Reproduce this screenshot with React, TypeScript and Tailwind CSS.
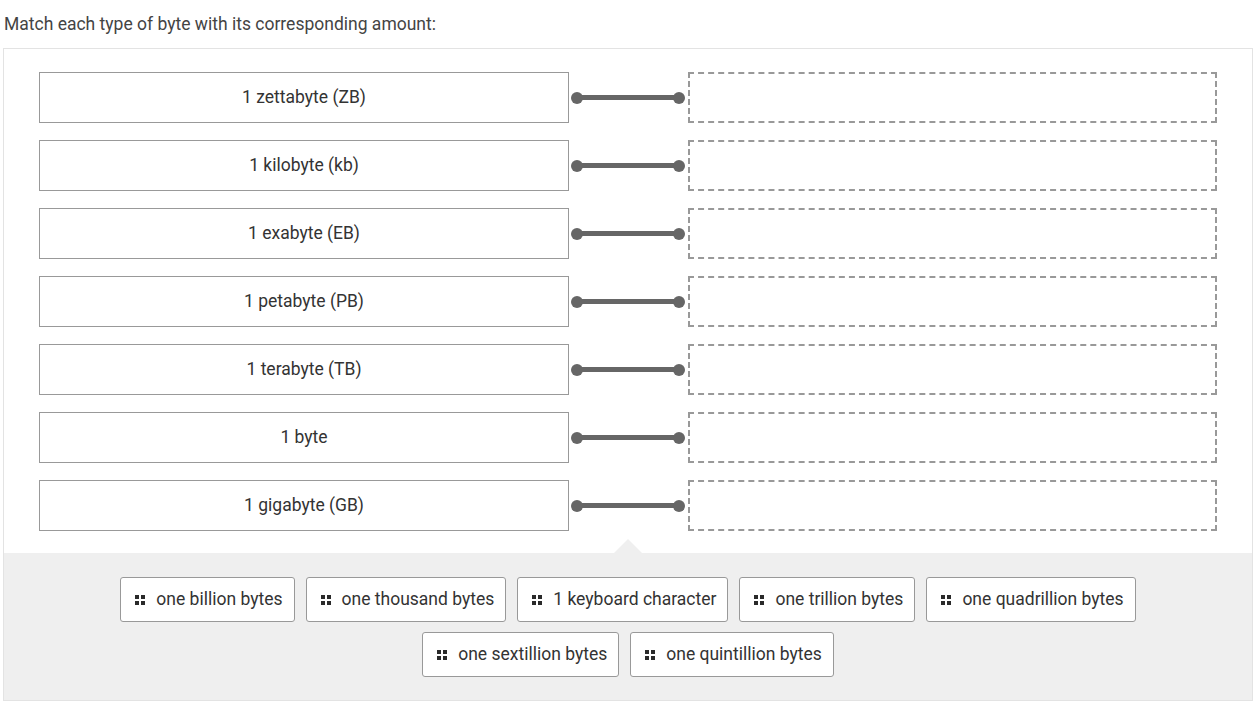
const terms = [
  "1 zettabyte (ZB)",
  "1 kilobyte (kb)",
  "1 exabyte (EB)",
  "1 petabyte (PB)",
  "1 terabyte (TB)",
  "1 byte",
  "1 gigabyte (GB)",
];

const firstRow = [
  "one billion bytes",
  "one thousand bytes",
  "1 keyboard character",
  "one trillion bytes",
  "one quadrillion bytes",
];

const secondRow = ["one sextillion bytes", "one quintillion bytes"];

function GripIcon() {
  return (
    <span className="grid grid-cols-2 gap-[2px]">
      <span className="h-[4px] w-[4px] bg-[#2a2a2a]" />
      <span className="h-[4px] w-[4px] bg-[#2a2a2a]" />
      <span className="h-[4px] w-[4px] bg-[#2a2a2a]" />
      <span className="h-[4px] w-[4px] bg-[#2a2a2a]" />
    </span>
  );
}

function Chip({ label }: { label: string }) {
  return (
    <div className="flex h-[45px] items-center gap-[11px] rounded-[3px] border border-[#999] bg-white pl-[14px] pr-[11px] text-[17.5px] text-[#333]">
      <GripIcon />
      {label}
    </div>
  );
}

function Connector() {
  return (
    <div className="flex items-center pl-[2px] pr-[3px]">
      <span className="h-[12px] w-[12px] shrink-0 rounded-full bg-[#666]" />
      <span className="-mx-[2px] h-[5px] flex-1 bg-[#666]" />
      <span className="h-[12px] w-[12px] shrink-0 rounded-full bg-[#666]" />
    </div>
  );
}

export default function App() {
  return (
    <div
      className="min-h-screen bg-white text-[#333]"
      style={{ fontFamily: "Roboto, 'Liberation Sans', sans-serif" }}
    >
      <p className="pl-[4px] pt-[14px] text-[17.5px] leading-[20px] text-[#444]">
        Match each type of byte with its corresponding amount:
      </p>

      <div className="ml-[3px] mt-[14px] w-[1250px] border border-[#e3e3e3]">
        <div className="flex flex-col gap-[17px] bg-white px-[35px] pb-[22px] pt-[23px]">
          {terms.map((term) => (
            <div key={term} className="grid h-[51px] grid-cols-[530px_119px_1fr]">
              <div className="flex items-center justify-center border border-[#999] text-[17.5px] text-[#333]">
                {term}
              </div>
              <Connector />
              <div className="border-2 border-dashed border-[#999]" />
            </div>
          ))}
        </div>

        <div className="relative flex flex-col items-center gap-[10px] bg-[#efefef] pb-[23px] pt-[24px]">
          <span className="absolute left-[610px] top-[-14px] h-0 w-0 border-x-[14px] border-b-[14px] border-x-transparent border-b-[#efefef]" />
          <div className="flex gap-[11px]">
            {firstRow.map((item) => (
              <Chip key={item} label={item} />
            ))}
          </div>
          <div className="flex gap-[11px]">
            {secondRow.map((item) => (
              <Chip key={item} label={item} />
            ))}
          </div>
        </div>
      </div>
    </div>
  );
}
